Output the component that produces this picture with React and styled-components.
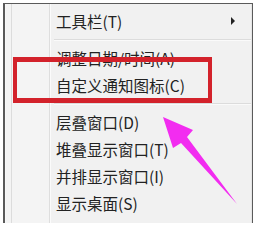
import React from "react";
import styled, { createGlobalStyle } from "styled-components";

const Global = createGlobalStyle`
  html, body { margin: 0; padding: 0; background: #ffffff; }
  body { width: 261px; height: 225px; overflow: hidden; }
`;

const Stage = styled.div`
  position: relative;
  width: 261px;
  height: 225px;
  padding: 3px 0 0 3px;
  box-sizing: border-box;
`;

const Menu = styled.div`
  display: flex;
  width: 250px;
  height: 220px;
  box-sizing: border-box;
  border: 1px solid #5a5a5a;
  border-left-width: 2px;
  border-bottom: none;
  background: #f1f1f1;
  font-family: "Noto Sans CJK SC", "Noto Sans", sans-serif;
`;

const Gutter = styled.div`
  flex: none;
  width: 45px;
  box-sizing: border-box;
  background: #f4f4f4;
  border-left: 1px solid #f8f8f8;
  box-shadow: inset 5px 0 0 #f4f4f4, inset 6px 0 0 #dcdcdc;
  border-right: 1px solid #dedede;
`;

const Items = styled.div`
  flex: 1;
  display: flex;
  flex-direction: column;
  padding-top: 3px;
  border-left: 1px solid #fbfbfb;
  border-right: 1px solid #e6e6e6;
`;

const Item = styled.div`
  display: flex;
  align-items: center;
  height: 27px;
  padding-left: 5px;
  padding-right: 14px;
  font-size: 15.5px;
  color: #222222;
  white-space: nowrap;
`;

const Label = styled.span`
  flex: 1;
`;

const SubArrow = styled.span`
  width: 0;
  height: 0;
  border-top: 4px solid transparent;
  border-bottom: 4px solid transparent;
  border-left: 4px solid #222;
  margin-right: 2px;
`;

const Separator = styled.div`
  height: 10px;
  display: flex;
  align-items: center;
  &::after {
    content: "";
    flex: 1;
    height: 1px;
    margin-left: 3px;
    background: #dcdcdc;
    box-shadow: 0 1px 0 #fafafa;
  }
`;

const Highlight = styled.div`
  position: absolute;
  left: 13px;
  top: 57px;
  width: 199px;
  height: 46px;
  box-sizing: border-box;
  border: 4px solid #d3222b;
  border-top-width: 5px;
  border-bottom-width: 5px;
  pointer-events: none;
`;

const Pointer = styled.svg`
  position: absolute;
  left: 0;
  top: 0;
  width: 261px;
  height: 225px;
  pointer-events: none;
`;

export default function App() {
  return (
    <>
      <Global />
      <Stage>
        <Menu>
          <Gutter />
          <Items>
            <Item>
              <Label>工具栏(T)</Label>
              <SubArrow />
            </Item>
            <Separator />
            <Item>
              <Label>调整日期/时间(A)</Label>
            </Item>
            <Item>
              <Label>自定义通知图标(C)</Label>
            </Item>
            <Separator />
            <Item>
              <Label>层叠窗口(D)</Label>
            </Item>
            <Item>
              <Label>堆叠显示窗口(T)</Label>
            </Item>
            <Item>
              <Label>并排显示窗口(I)</Label>
            </Item>
            <Item>
              <Label>显示桌面(S)</Label>
            </Item>
          </Items>
        </Menu>
        <Highlight />
        <Pointer viewBox="0 0 261 225">
          <polygon
            points="163,117 193,130 187,137 237,204 181,143 173,148"
            fill="#f22cf0"
          />
        </Pointer>
      </Stage>
    </>
  );
}
